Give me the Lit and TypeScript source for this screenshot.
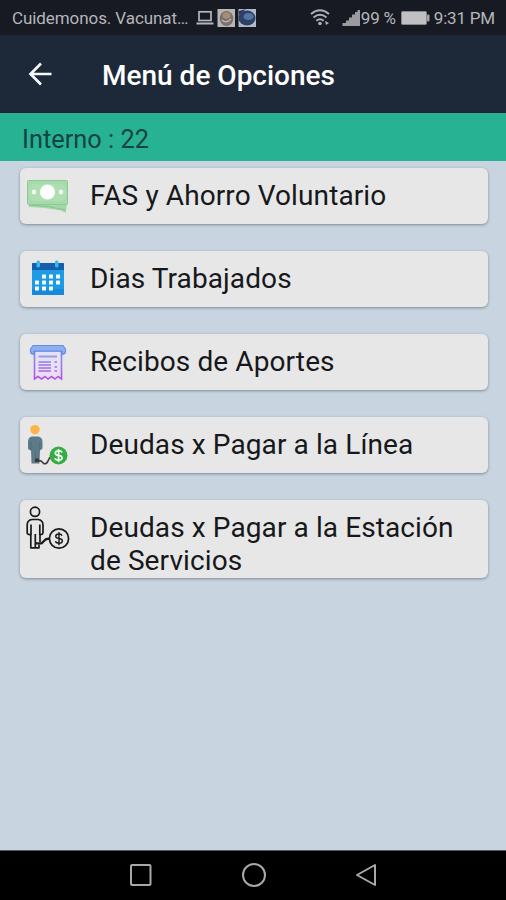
import { LitElement, html, css, svg } from "lit";
import { customElement } from "lit/decorators.js";

const cells = [
  [18, 20], [25, 20], [32, 20],
  [11, 26], [18, 26], [25, 26], [32, 26],
  [11, 32], [18, 32], [25, 32],
];

const money = svg`
  <path d="M4 30 H43.5 L41.5 41 L37 38.5 L20 36 L5 35 Z" fill="#a4d8aa"/>
  <path d="M5 33 L24 34.5 L42 38" fill="none" stroke="#84c490"/>
  <rect x="3.5" y="8.5" width="40" height="24" rx="1" fill="#a6d9ab" stroke="#8ccb98"/>
  <path d="M8 12 H39 L42 16 V25 L39 29 H8 L5 25 V16 Z" fill="#b0deb3"/>
  <circle cx="23.5" cy="20" r="7.6" fill="#fff"/>
  <circle cx="10" cy="20" r="2.2" fill="#fff"/>
  <circle cx="37" cy="20" r="2.2" fill="#fff"/>`;

const calendar = svg`
  <rect x="8" y="8" width="32" height="32" rx="1" fill="#1e9be2"/>
  <path d="M8 34 H40 V39 Q40 40 39 40 H9 Q8 40 8 39 Z" fill="#1789d8"/>
  <path d="M9 8 H39 Q40 8 40 9 V15 H8 V9 Q8 8 9 8 Z" fill="#1560ad"/>
  <rect x="12.5" y="5.5" width="3.5" height="7" rx="1.5" fill="#36b8ef"/>
  <rect x="31" y="5.5" width="3.5" height="7" rx="1.5" fill="#36b8ef"/>
  ${cells.map(([x, y]) => svg`<rect x=${x} y=${y - 0.5} width="4" height="4" rx=".5" fill="#f2fbff"/>`)}`;

const receipt = svg`
  <defs>
    <linearGradient id="rc" gradientUnits="userSpaceOnUse" x1="0" y1="7" x2="0" y2="42">
      <stop offset="0" stop-color="#5b8ce6"/>
      <stop offset=".45" stop-color="#8d82ea"/>
      <stop offset="1" stop-color="#c04bea"/>
    </linearGradient>
  </defs>
  <path d="M10.5 13 V41 L14 38.5 L17.5 41 L21 38.5 L24 41 L27.5 38.5 L31 41 L34 38.5 L37.5 41 V13 Z"
    fill="#e9dff5" stroke="url(#rc)" stroke-width="1.6"/>
  <path d="M9 7.5 H39 L41.5 11 V14 Q41 16.2 38 16.2 V13 H10 V16.2 Q7 16.2 6.5 14 V11 Z"
    fill="#8fb0ee" stroke="#648de5" stroke-width="1.2" stroke-linejoin="round"/>
  <path d="M14.5 18.5 H33" stroke="#86a6e8" stroke-width="2"/>
  <path d="M14.5 24 H27 M14.5 27 H27 M14.5 30 H27 M14.5 33 H27 M30.5 24 H33 M30.5 29 H33 M30.5 33 H33"
    stroke="url(#rc)" stroke-width="2" opacity=".75"/>`;

const debtor = svg`
  <circle cx="11" cy="8.6" r="4.7" fill="#fdb348"/>
  <path d="M8 15.5 H14 Q18.5 16 18.5 21 V27 Q18.5 29 16 29 L15.5 42.5 H7.5 L7 29 Q4 29 4 27 V21 Q4 16 8 15.5 Z" fill="#5b7b89"/>
  <path d="M7 21 V30 M15.6 21 V30 M11.5 31 V42" stroke="#4c6977" stroke-width=".7"/>
  <path d="M12 39 L17 40 L20 42.8 Q23 43 24 40 L26 36" fill="none" stroke="#40333b" stroke-width="1.6"/>
  <rect x="11" y="37.5" width="4" height="3.5" fill="#40333b"/>
  <circle cx="34.5" cy="34.5" r="9" fill="#35ac44"/>
  <path d="M38 31.6 Q37.5 29.9 34.6 29.9 Q31.3 29.9 31.3 32.2 Q31.3 34 34.6 34.4 Q38 34.8 38 37 Q38 39.2 34.6 39.2 Q31.3 39.2 31.1 37.2 M34.6 28 V41"
    fill="none" stroke="#eefaef" stroke-width="1.7"/>`;

const debtorLine = svg`
  <g fill="none" stroke="#1a1a1a" stroke-width="1.7" stroke-linejoin="round">
    <circle cx="11" cy="7.8" r="4.6"/>
    <path d="M8 15.5 H14 Q19 16 19 21 V29 Q18.8 30.8 16 30.5 V38 M8 15.5 Q3.2 16 3.2 21 V29 Q3.4 30.8 6.8 30.5 V43.8 H15 V40.5"/>
    <path d="M7 20.5 V31 M15.8 20.5 V31 M11.3 30 V43.5"/>
    <path d="M12 39.3 H17.5 L21 36 Q22 34.5 25.5 34.8" stroke-width="2.3"/>
    <circle cx="35" cy="34.5" r="9.6"/>
    <path d="M38 31.8 Q37.5 30 35 30 Q31.7 30 31.7 32.2 Q31.7 34 35 34.4 Q38.4 34.8 38.4 37 Q38.4 39.2 35 39.2 Q31.8 39.2 31.5 37.2 M35 28 V41.2" stroke-width="1.4"/>
  </g>`;

const options = [
  { icon: money, label: "FAS y Ahorro Voluntario" },
  { icon: calendar, label: "Dias Trabajados" },
  { icon: receipt, label: "Recibos de Aportes" },
  { icon: debtor, label: "Deudas x Pagar a la Línea" },
  { icon: debtorLine, label: "Deudas x Pagar a la Estación de Servicios" },
];

@customElement("app-root")
export class AppRoot extends LitElement {
  static styles = css`
    :host {
      display: flex;
      flex-direction: column;
      height: 900px;
      width: 506px;
      overflow: hidden;
      background: #c8d5e0;
      font-family: Roboto, "Liberation Sans", sans-serif;
    }
    svg { display: block; flex: none; }
    .status {
      box-sizing: border-box;
      height: 35px;
      flex: none;
      display: flex;
      align-items: center;
      padding: 1px 11px 0 12px;
      background: #171a22;
      color: #b5b6ba;
      font-size: 17px;
      white-space: nowrap;
    }
    .notice { width: 183px; letter-spacing: -0.08px; }
    .wifi { margin-left: auto; }
    .signal { margin-left: 11px; }
    .percent { width: 40px; letter-spacing: -0.2px; }
    .time { margin-left: 4px; letter-spacing: -0.2px; }
    .bar {
      box-sizing: border-box;
      height: 78px;
      flex: none;
      display: flex;
      align-items: center;
      padding: 0 0 0 24px;
      background: #1d2838;
      border-bottom: 1px solid #17222f;
      color: #fff;
    }
    .title {
      margin: 4px 0 0 46px;
      font-size: 28px;
      font-weight: 500;
      white-space: nowrap;
    }
    .intern {
      box-sizing: border-box;
      height: 48px;
      flex: none;
      padding: 2px 0 0 22px;
      background: #28b294;
      color: #14443f;
      font-size: 25.4px;
      line-height: 48px;
    }
    .list {
      flex: 1;
      display: flex;
      flex-direction: column;
      gap: 27px;
      padding: 7px 18px 0 20px;
    }
    .card {
      box-sizing: border-box;
      min-height: 56px;
      display: flex;
      align-items: flex-start;
      padding: 4px 16px 1px 4px;
      border-radius: 6px;
      background: #e7e7e7;
      box-shadow: 0 1px 3px rgba(50, 65, 80, 0.5);
    }
    .label {
      margin: 7px 0 0 18px;
      color: #16181b;
      font-size: 28px;
      line-height: 33px;
      letter-spacing: 0.1px;
    }
    .nav {
      box-sizing: border-box;
      height: 50px;
      flex: none;
      display: flex;
      align-items: center;
      justify-content: center;
      gap: 88px;
      padding: 0 0 2px 1px;
      background: #000;
      border-top: 1px solid #50585f;
    }
  `;

  render() {
    return html`
      <header class="status">
        <span class="notice">Cuidemonos. Vacunat…</span>
        <svg width="62" height="20" viewBox="195 8 62 20">
          <rect x="199" y="11.8" width="12" height="8.7" fill="none" stroke="#b5b6ba" stroke-width="1.7" />
          <path d="M196.5 23.5 H213.5" stroke="#b5b6ba" stroke-width="2" />
          <rect x="217.5" y="9" width="17.5" height="18" fill="#b8b6b4" />
          <ellipse cx="226.5" cy="18.5" rx="6.8" ry="7.5" fill="#77706c" />
          <ellipse cx="226.5" cy="15.5" rx="4" ry="3.2" fill="#a98b76" />
          <path d="M222 20 Q226 24 231 19" fill="none" stroke="#b9b4ae" stroke-width="1.5" />
          <rect x="238.5" y="9" width="17.5" height="18" fill="#aebbc8" />
          <ellipse cx="247" cy="18" rx="8.5" ry="7.4" fill="#2c4068" />
          <ellipse cx="248.5" cy="16.5" rx="5" ry="3.6" fill="#55759f" />
          <path d="M239 11 L246 9 L239 15 Z" fill="#27384c" />
        </svg>
        <svg class="wifi" width="21" height="18" viewBox="310 9 21 18">
          <g fill="none" stroke="#aeb0b4" stroke-width="1.9">
            <path d="M311 14 Q320 6.5 329 14" />
            <path d="M313.5 17.5 Q320 12 326.5 17.5" />
            <path d="M316.3 20.7 Q320 17.7 323.7 20.7" />
          </g>
          <circle cx="320" cy="23.5" r="1.8" fill="#aeb0b4" />
          <path d="M325 21 L329 23 L326 25 Z" fill="#aeb0b4" />
        </svg>
        <svg class="signal" width="19" height="18" viewBox="341 8 19 18">
          <path d="M341.5 25 V22 H345 V19.5 H348 V16.5 H351 V13.5 H354 V11 H356.5 V9 H359 V25 Z" fill="#999b9f" />
        </svg>
        <span class="percent">99 %</span>
        <svg width="29" height="16" viewBox="401 10 29 16">
          <rect x="401.5" y="11.5" width="25" height="13" rx="1" fill="#c0c0c2" stroke="#85878b" />
          <rect x="427" y="14.5" width="2.5" height="7" rx="1" fill="#a5a7aa" />
        </svg>
        <span class="time">9:31 PM</span>
      </header>
      <div class="bar">
        <svg width="32" height="32" viewBox="24 58 32 32">
          <path d="M51.5 74 H30.5 M41 63.5 L30.5 74 L41 84.5" fill="none" stroke="#f6f8fa" stroke-width="2.7" />
        </svg>
        <div class="title">Menú de Opciones</div>
      </div>
      <div class="intern">Interno : 22</div>
      <main class="list">
        ${options.map(
          (o) => html`<div class="card">
            <svg width="48" height="48" viewBox="0 0 48 48">${o.icon}</svg>
            <div class="label">${o.label}</div>
          </div>`
        )}
      </main>
      <nav class="nav">
        <svg width="24" height="24" viewBox="0 0 24 24">
          <rect x="2" y="2" width="19.5" height="20" rx="1" fill="none" stroke="#a9a7a7" stroke-width="2" />
        </svg>
        <svg width="26" height="26" viewBox="0 0 26 26">
          <circle cx="13" cy="13" r="11" fill="none" stroke="#a9a7a7" stroke-width="2" />
        </svg>
        <svg width="24" height="24" viewBox="0 0 24 24">
          <path d="M20 2 V22 L2 12 Z" fill="none" stroke="#a9a7a7" stroke-width="2" stroke-linejoin="round" />
        </svg>
      </nav>
    `;
  }
}
